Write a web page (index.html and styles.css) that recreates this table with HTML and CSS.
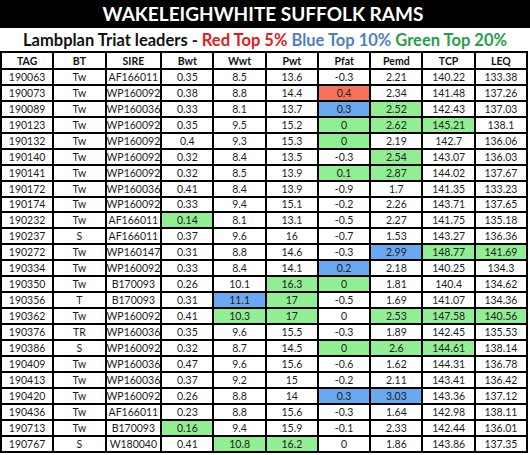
FILE: index.html
```html
<!DOCTYPE html>
<html>
<head>
<meta charset="utf-8">
<link rel="stylesheet" href="styles.css">
</head>
<body>
<div class="page">
  <div class="title">WAKELEIGHWHITE SUFFOLK RAMS</div>
  <div class="subtitle">Lambplan Triat leaders - <span class="t-red">Red Top 5%</span> <span class="t-blue">Blue Top 10%</span> <span class="t-green">Green Top 20%</span></div>
  <div class="sheet" id="sheet">
    <div class="c h">TAG</div><div class="c h">BT</div><div class="c h">SIRE</div><div class="c h">Bwt</div><div class="c h">Wwt</div><div class="c h">Pwt</div><div class="c h">Pfat</div><div class="c h">Pemd</div><div class="c h">TCP</div><div class="c h">LEQ</div>

    <div class="c">190063</div><div class="c">Tw</div><div class="c">AF166011</div><div class="c">0.35</div><div class="c">8.5</div><div class="c">13.6</div><div class="c">-0.3</div><div class="c">2.21</div><div class="c">140.22</div><div class="c">133.38</div>
    <div class="c">190073</div><div class="c">Tw</div><div class="c">WP160092</div><div class="c">0.38</div><div class="c">8.8</div><div class="c">14.4</div><div class="c red">0.4</div><div class="c">2.34</div><div class="c">141.48</div><div class="c">137.26</div>
    <div class="c">190089</div><div class="c">Tw</div><div class="c">WP160036</div><div class="c">0.33</div><div class="c">8.1</div><div class="c">13.7</div><div class="c blue">0.3</div><div class="c green">2.52</div><div class="c">142.43</div><div class="c">137.03</div>
    <div class="c">190123</div><div class="c">Tw</div><div class="c">WP160092</div><div class="c">0.35</div><div class="c">9.5</div><div class="c">15.2</div><div class="c green">0</div><div class="c green">2.62</div><div class="c green">145.21</div><div class="c">138.1</div>
    <div class="c">190132</div><div class="c">Tw</div><div class="c">WP160092</div><div class="c">0.4</div><div class="c">9.3</div><div class="c">15.3</div><div class="c green">0</div><div class="c">2.19</div><div class="c">142.7</div><div class="c">136.06</div>
    <div class="c">190140</div><div class="c">Tw</div><div class="c">WP160092</div><div class="c">0.32</div><div class="c">8.4</div><div class="c">13.5</div><div class="c">-0.3</div><div class="c green">2.54</div><div class="c">143.07</div><div class="c">136.03</div>
    <div class="c">190141</div><div class="c">Tw</div><div class="c">WP160092</div><div class="c">0.32</div><div class="c">8.5</div><div class="c">13.9</div><div class="c green">0.1</div><div class="c green">2.87</div><div class="c">144.02</div><div class="c">137.67</div>
    <div class="c">190172</div><div class="c">Tw</div><div class="c">WP160036</div><div class="c">0.41</div><div class="c">8.4</div><div class="c">13.9</div><div class="c">-0.9</div><div class="c">1.7</div><div class="c">141.35</div><div class="c">133.23</div>
    <div class="c">190174</div><div class="c">Tw</div><div class="c">WP160092</div><div class="c">0.33</div><div class="c">9.4</div><div class="c">15.1</div><div class="c">-0.2</div><div class="c">2.26</div><div class="c">143.71</div><div class="c">137.65</div>
    <div class="c">190232</div><div class="c">Tw</div><div class="c">AF166011</div><div class="c green">0.14</div><div class="c">8.1</div><div class="c">13.1</div><div class="c">-0.5</div><div class="c">2.27</div><div class="c">141.75</div><div class="c">135.18</div>
    <div class="c">190237</div><div class="c">S</div><div class="c">AF166011</div><div class="c">0.37</div><div class="c">9.6</div><div class="c">16</div><div class="c">-0.7</div><div class="c">1.53</div><div class="c">143.27</div><div class="c">136.36</div>
    <div class="c">190272</div><div class="c">Tw</div><div class="c">WP160147</div><div class="c">0.31</div><div class="c">8.8</div><div class="c">14.6</div><div class="c">-0.3</div><div class="c blue">2.99</div><div class="c green">148.77</div><div class="c green">141.69</div>
    <div class="c">190334</div><div class="c">Tw</div><div class="c">WP160092</div><div class="c">0.33</div><div class="c">8.4</div><div class="c">14.1</div><div class="c blue">0.2</div><div class="c">2.18</div><div class="c">140.25</div><div class="c">134.3</div>
    <div class="c">190350</div><div class="c">Tw</div><div class="c">B170093</div><div class="c">0.26</div><div class="c">10.1</div><div class="c green">16.3</div><div class="c green">0</div><div class="c">1.81</div><div class="c">140.4</div><div class="c">134.62</div>
    <div class="c">190356</div><div class="c">T</div><div class="c">B170093</div><div class="c">0.31</div><div class="c blue">11.1</div><div class="c green">17</div><div class="c">-0.5</div><div class="c">1.69</div><div class="c">141.07</div><div class="c">134.36</div>
    <div class="c">190362</div><div class="c">Tw</div><div class="c">WP160092</div><div class="c">0.41</div><div class="c green">10.3</div><div class="c green">17</div><div class="c">0</div><div class="c green">2.53</div><div class="c green">147.58</div><div class="c green">140.56</div>
    <div class="c">190376</div><div class="c">TR</div><div class="c">WP160036</div><div class="c">0.35</div><div class="c">9.6</div><div class="c">15.5</div><div class="c">-0.3</div><div class="c">1.89</div><div class="c">142.45</div><div class="c">135.53</div>
    <div class="c">190386</div><div class="c">S</div><div class="c">WP160092</div><div class="c">0.32</div><div class="c">8.7</div><div class="c">14.5</div><div class="c green">0</div><div class="c green">2.6</div><div class="c green">144.61</div><div class="c">138.14</div>
    <div class="c">190409</div><div class="c">Tw</div><div class="c">WP160036</div><div class="c">0.47</div><div class="c">9.6</div><div class="c">15.6</div><div class="c">-0.6</div><div class="c">1.62</div><div class="c">144.31</div><div class="c">136.78</div>
    <div class="c">190413</div><div class="c">Tw</div><div class="c">WP160036</div><div class="c">0.37</div><div class="c">9.2</div><div class="c">15</div><div class="c">-0.2</div><div class="c">2.11</div><div class="c">143.41</div><div class="c">136.42</div>
    <div class="c">190420</div><div class="c">Tw</div><div class="c">WP160092</div><div class="c">0.26</div><div class="c">8.8</div><div class="c">14</div><div class="c blue">0.3</div><div class="c blue">3.03</div><div class="c">143.36</div><div class="c">137.12</div>
    <div class="c">190436</div><div class="c">Tw</div><div class="c">AF166011</div><div class="c">0.23</div><div class="c">8.8</div><div class="c">15.6</div><div class="c">-0.3</div><div class="c">1.64</div><div class="c">142.98</div><div class="c">138.11</div>
    <div class="c">190713</div><div class="c">Tw</div><div class="c">B170093</div><div class="c green">0.16</div><div class="c">9.4</div><div class="c">15.9</div><div class="c">-0.1</div><div class="c">2.33</div><div class="c">142.44</div><div class="c">136.01</div>
    <div class="c">190767</div><div class="c">S</div><div class="c">W180040</div><div class="c">0.41</div><div class="c green">10.8</div><div class="c green">16.2</div><div class="c">0</div><div class="c">1.86</div><div class="c">143.86</div><div class="c">137.35</div>
  </div>
</div>
</body>
</html>
```
FILE: styles.css
```css
html, body {
  margin: 0;
  padding: 0;
  background: #ffffff;
}
.page {
  width: 530px;
  height: 455px;
  overflow: hidden;
  font-family: Lato, "Open Sans", "Liberation Sans", sans-serif;
}
.title {
  height: 28px;
  background: #000000;
  color: #ffffff;
  font-weight: 700;
  font-size: 19px;
  line-height: 28px;
  text-align: center;
  padding-right: 4px;
}
.subtitle {
  height: 23px;
  line-height: 24px;
  font-weight: 700;
  font-size: 16.5px;
  color: #111111;
  text-align: center;
  white-space: nowrap;
}
.t-red { color: #e31b1f; }
.t-blue { color: #4f7fbf; }
.t-green { color: #27a04a; }
.sheet {
  width: 528px;
  box-sizing: border-box;
  display: grid;
  grid-template-columns: repeat(10, 1fr);
  grid-template-rows: 15px;
  grid-auto-rows: 13.95px;
  gap: 2px;
  padding: 2px;
  background: #000000;
}
.c {
  background: #ffffff;
  color: #1c1c1c;
  font-size: 10.5px;
  text-align: center;
  display: flex;
  align-items: center;
  justify-content: center;
  white-space: nowrap;
  overflow: visible;
}
.h {
  font-weight: 700;
  color: #111111;
}
.red { background: #f5735a; }
.blue { background: #6aa9f2; }
.green { background: #92ee92; }
```
